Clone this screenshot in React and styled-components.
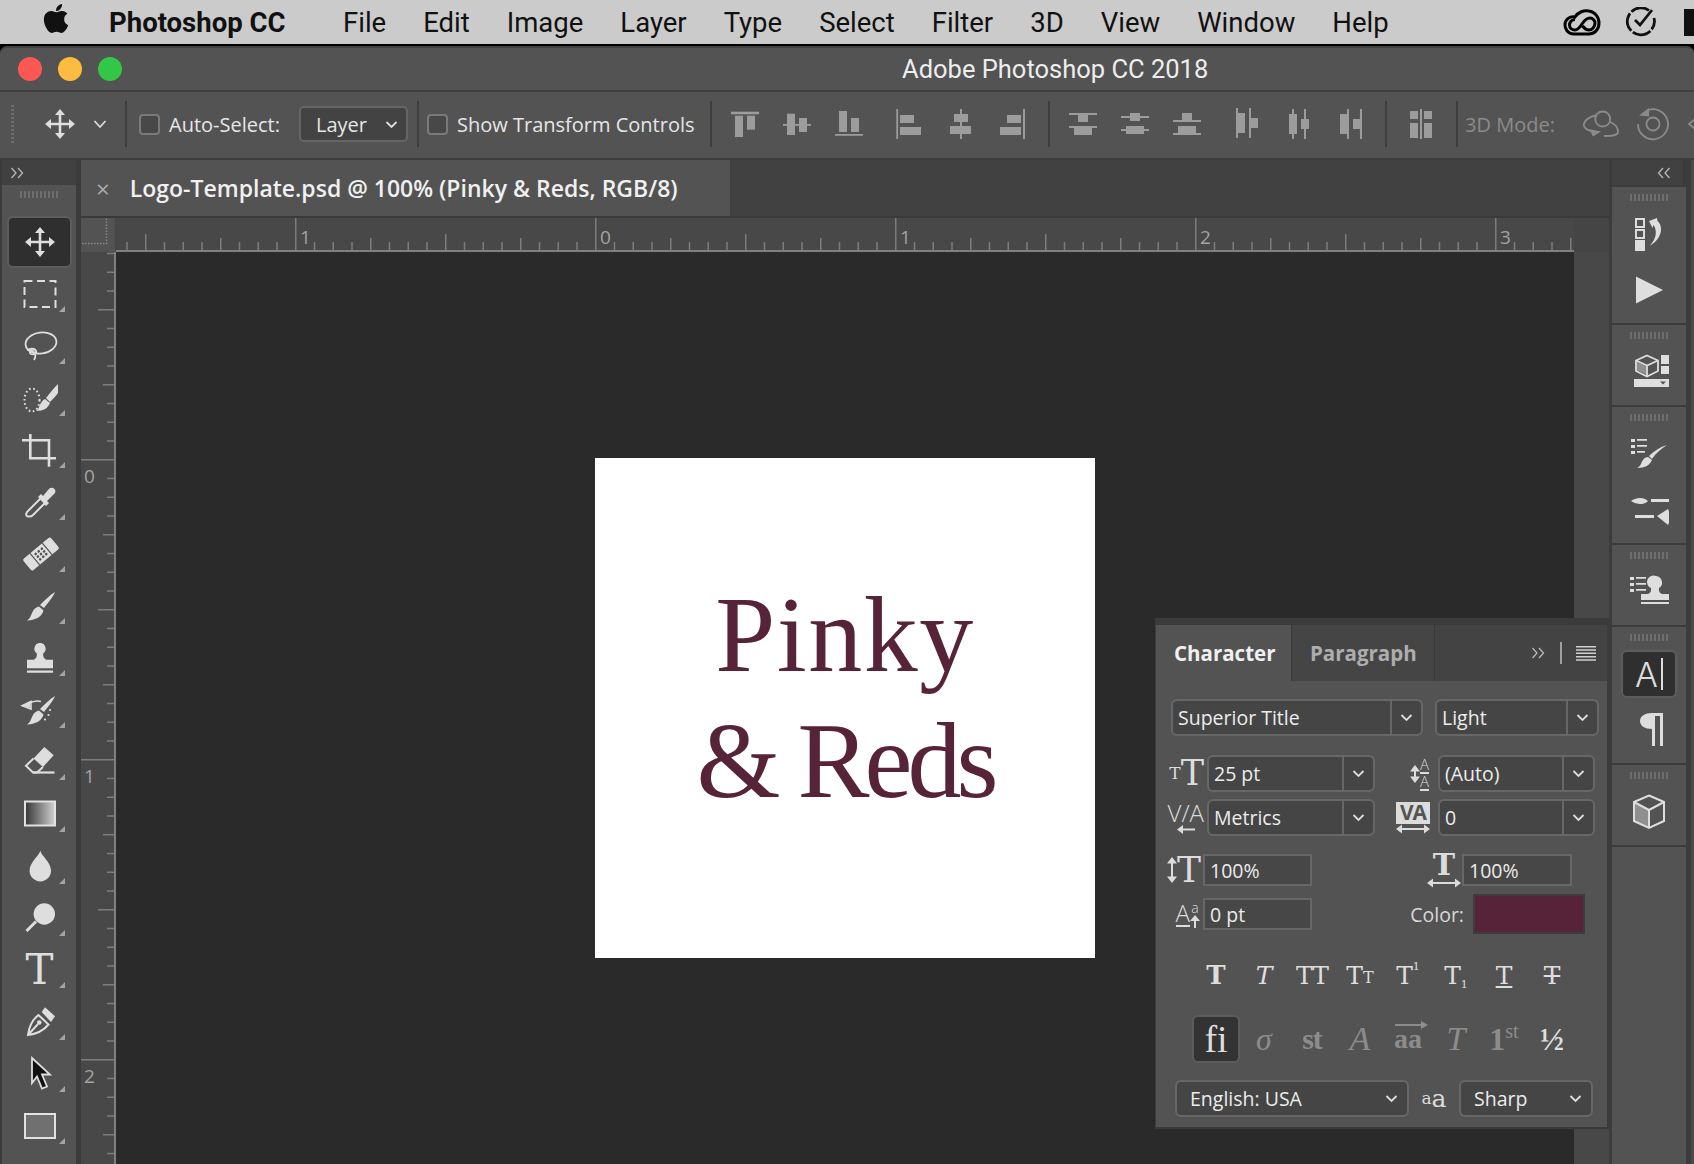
import React from 'react';
import styled, { createGlobalStyle } from 'styled-components';
import { FaApple } from 'react-icons/fa';

const UI = '"Open Sans", "Noto Sans", sans-serif';
const SERIF = '"DejaVu Serif", "Liberation Serif", serif';
const TIMES = '"Liberation Serif", serif';

const Global = createGlobalStyle`
  html, body { margin: 0; padding: 0; width: 1694px; height: 1164px; overflow: hidden; background: #000; }
  * { box-sizing: border-box; }
`;

const Page = styled.div`
  width: 1694px;
  height: 1164px;
  display: flex;
  flex-direction: column;
  overflow: hidden;
  background: #000;
`;

const MenuBar = styled.div`
  height: 46px;
  flex: none;
  display: flex;
  align-items: center;
  background: #cbcbcb;
  border-bottom: 2px solid #000;
  padding-left: 42px;
  font-family: Roboto, sans-serif;
  font-size: 27.5px;
  color: #111;
`;
const AppleMark = styled(FaApple)`
  width: 28px;
  height: 33px;
  margin-top: -8px;
  margin-right: 39px;
  color: #111;
`;
const AppName = styled.span`
  font-weight: 700;
  width: 196px;
  white-space: nowrap;
  margin-right: 38px;
`;
const MenuItem = styled.span`
  margin-right: 37px;
  white-space: nowrap;
`;
const MenuRight = styled.div`
  margin-left: auto;
  display: flex;
  align-items: center;
  gap: 24px;
`;
const MenuCut = styled.div`
  width: 10px;
  height: 27px;
  background: #111;
  margin-left: 3px;
`;

const AppWindow = styled.div`
  flex: 1;
  display: flex;
  flex-direction: column;
  min-height: 0;
  background: #3c3c3c;
  border-radius: 7px 7px 0 0;
  border-top: 2px solid #424242;
  overflow: hidden;
  font-family: ${UI};
`;

const TitleBar = styled.div`
  height: 44px;
  flex: none;
  display: flex;
  align-items: center;
  background: #535353;
  border-bottom: 2px solid #3f3f3f;
  padding-left: 18px;
`;
const Light = styled.span`
  width: 24px;
  height: 24px;
  border-radius: 50%;
  background: ${p => p.$color};
  margin-right: ${p => p.$gap}px;
`;
const WindowTitle = styled.span`
  margin-left: 780px;
  font-family: Roboto, sans-serif;
  font-size: 25.5px;
  color: #ededed;
  white-space: nowrap;
`;

const OptionsBar = styled.div`
  height: 68px;
  flex: none;
  display: flex;
  align-items: center;
  background: #535353;
  border-bottom: 2px solid #3d3d3d;
  padding-bottom: 2px;
  overflow: hidden;
`;
const DotGrip = styled.div`
  flex: none;
  width: 3px;
  height: 38px;
  margin-left: 11px;
  background: repeating-linear-gradient(to bottom, #6d6d6d 0 2px, transparent 2px 4px);
`;
const BarSep = styled.div`
  flex: none;
  width: 2px;
  height: 46px;
  background: #3e3e3e;
  margin-left: ${p => p.$ml}px;
`;
const CheckBox = styled.span`
  flex: none;
  width: 21px;
  height: 21px;
  border: 2px solid #7a7a7a;
  border-radius: 4px;
  background: #484848;
  margin-left: ${p => p.$ml}px;
`;
const BarLabel = styled.span`
  flex: none;
  width: ${p => p.$w}px;
  margin-left: ${p => p.$ml}px;
  font-size: 20px;
  color: ${p => (p.$dim ? '#8b8b8b' : '#e6e6e6')};
  white-space: nowrap;
`;
const BarSelect = styled.div`
  flex: none;
  width: 109px;
  height: 36px;
  margin-left: 9px;
  display: flex;
  align-items: center;
  justify-content: space-between;
  padding: 0 8px 0 15px;
  font-size: 20px;
  color: #e6e6e6;
  background: #434343;
  border: 2px solid #666;
  border-radius: 5px;
`;
const Slot = styled.svg`
  flex: none;
  width: ${p => p.$w || 52}px;
  height: 40px;
  margin-left: ${p => p.$ml || 0}px;
  fill: ${p => p.$color || '#9c9c9c'};
`;

const Workspace = styled.div`
  flex: 1;
  min-height: 0;
  display: flex;
  position: relative;
`;

const LeftDock = styled.div`
  flex: none;
  width: 81px;
  display: flex;
  flex-direction: column;
  background: #3b3b3b;
  padding-left: 2px;
`;
const DockHead = styled.div`
  height: 25px;
  flex: none;
  display: flex;
  align-items: center;
  justify-content: ${p => p.$right ? 'flex-end' : 'flex-start'};
  padding: ${p => p.$right ? '0 12px 0 0' : '0 0 0 8px'};
  background: #414141;
  margin-right: ${p => p.$right ? 0 : 5}px;
`;
const ToolPanel = styled.div`
  flex: 1;
  min-height: 0;
  width: 74px;
  background: #535353;
  overflow: hidden;
  position: relative;
`;
const Grip = styled.div`
  height: 7px;
  width: 38px;
  margin: ${p => p.$top}px auto ${p => p.$bottom}px;
  background: repeating-linear-gradient(to right, #6d6d6d 0 2px, transparent 2px 4px);
`;
const ToolSlot = styled.div`
  position: relative;
  width: 65px;
  height: 52px;
  margin-left: 5px;
  display: flex;
  align-items: center;
  justify-content: center;
  border-radius: 6px;
  border: 2px solid ${p => (p.$active ? '#5c5c5c' : 'transparent')};
  background: ${p => (p.$active ? '#2f2f2f' : 'transparent')};
  color: #dedede;
  &::after {
    content: '';
    display: ${p => (p.$corner ? 'block' : 'none')};
    position: absolute;
    right: 5px;
    bottom: 6px;
    border-style: solid;
    border-width: 0 0 6px 6px;
    border-color: transparent transparent #a5a5a5 transparent;
  }
`;
const ToolSvg = styled.svg`
  width: 40px;
  height: 40px;
  fill: #dedede;
  stroke: none;
  flex: none;
`;
const ToolT = styled.span`
  font-family: ${SERIF};
  font-size: 42px;
  line-height: 40px;
  color: #dedede;
`;

const Main = styled.div`
  flex: none;
  width: 1528px;
  display: flex;
  flex-direction: column;
  min-height: 0;
`;
const DocTabs = styled.div`
  height: 58px;
  flex: none;
  background: #414141;
  border-bottom: 2px solid #3a3a3a;
  display: flex;
`;
const DocTab = styled.div`
  width: 650px;
  display: flex;
  align-items: center;
  padding-left: 15px;
  background: #535353;
  border-right: 1px solid #3f3f3f;
  font-size: 23px;
  font-weight: 600;
  color: #f0f0f0;
  white-space: nowrap;
`;
const TabClose = styled.span`
  font-weight: 400;
  font-size: 24px;
  color: #a9a9a9;
  margin-right: 20px;
`;
const RulerRow = styled.div`
  height: 34px;
  flex: none;
  display: flex;
  background: #454545;
`;
const RulerCorner = styled.svg`
  flex: none;
  width: 35px;
  height: 34px;
  background: #535353;
`;
const RulerSvg = styled.svg`
  flex: none;
  display: block;
  background: #484848;
`;
const CanvasRow = styled.div`
  flex: 1;
  min-height: 0;
  display: flex;
`;
const VRulerWrap = styled.div`
  flex: none;
  width: 35px;
  background: #484848;
`;
const Canvas = styled.div`
  flex: none;
  width: 1458px;
  display: flex;
  align-items: center;
  justify-content: center;
  background: #2a2a2a;
`;
const DocPage = styled.div`
  width: 500px;
  height: 500px;
  background: #fff;
  display: flex;
  flex-direction: column;
  align-items: center;
  justify-content: center;
  padding-bottom: 21px;
  font-family: ${TIMES};
  font-size: 108px;
  line-height: 126px;
  color: #572339;
`;
const DocLine = styled.div`
  letter-spacing: ${p => p.$spacing}px;
  white-space: pre;
`;
const ScrollColumn = styled.div`
  flex: none;
  width: 35px;
  background: #484848;
`;

const RightDock = styled.div`
  flex: none;
  width: 85px;
  display: flex;
  flex-direction: column;
  gap: 2px;
  background: #3c3c3c;
  padding-left: 3px;
  padding-right: 8px;
  border-right: 3px solid #4a4a4a;
`;
const DockGroup = styled.div`
  flex: ${p => (p.$fill ? 1 : 'none')};
  width: 74px;
  background: #535353;
  padding-bottom: 5px;
  margin-right: -4px;
`;
const DockSlot = styled.div`
  height: 56px;
  display: flex;
  align-items: center;
  justify-content: center;
`;
const ActiveBox = styled.div`
  width: 56px;
  height: 48px;
  display: flex;
  align-items: center;
  justify-content: center;
  background: #2f2f2f;
  border: 2px solid #5c5c5c;
  border-radius: 6px;
  font-family: Inter, sans-serif;
  font-size: 34px;
  font-weight: 300;
  color: #dedede;
`;
const Caret = styled.span`
  width: 2px;
  height: 32px;
  background: #dedede;
  margin-left: 3px;
`;

const CharPanel = styled.div`
  position: absolute;
  left: 1155px;
  top: 458px;
  width: 454px;
  height: 511px;
  display: flex;
  flex-direction: column;
  background: #535353;
  border: 1px solid #3b3b3b;
  border-top-width: 7px;
  border-bottom-width: 2px;
  border-right-width: 2px;
`;
const PanelTabs = styled.div`
  height: 56px;
  flex: none;
  display: flex;
  align-items: center;
  background: #434343;
`;
const PanelTab = styled.div`
  height: 100%;
  width: ${p => p.$w}px;
  display: flex;
  align-items: center;
  padding-left: ${p => p.$pl}px;
  font-size: 20.5px;
  font-weight: 700;
  background: ${p => (p.$active ? '#535353' : '#454545')};
  color: ${p => (p.$active ? '#f0f0f0' : '#adadad')};
  border-right: 1px solid #393939;
`;
const PanelTools = styled.div`
  margin-left: auto;
  margin-right: 11px;
  display: flex;
  align-items: center;
`;
const ThinSep = styled.span`
  width: 2px;
  height: 22px;
  background: #a0a0a0;
  margin: 0 14px 0 15px;
`;
const Row = styled.div`
  display: flex;
  align-items: center;
  height: ${p => p.$h}px;
  margin-top: ${p => p.$mt}px;
  padding-left: ${p => p.$pl || 0}px;
  flex: none;
`;
const Field = styled.div`
  flex: none;
  width: ${p => p.$w}px;
  height: 100%;
  display: flex;
  align-items: stretch;
  background: #454545;
  border: 2px solid #676767;
  border-radius: 6px;
  font-size: 19.5px;
  color: #ececec;
  margin-left: ${p => p.$ml || 0}px;
`;
const FieldText = styled.span`
  flex: 1;
  display: flex;
  align-items: center;
  padding-left: ${p => p.$pl || 5}px;
  white-space: nowrap;
`;
const FieldArrow = styled.span`
  flex: none;
  width: 31px;
  display: flex;
  align-items: center;
  justify-content: center;
  border-left: ${p => (p.$plain ? 'none' : '2px solid #676767')};
`;
const PlainInput = styled.div`
  flex: none;
  width: ${p => p.$w}px;
  height: 100%;
  display: flex;
  align-items: center;
  padding-left: 5px;
  background: #474747;
  border: 2px solid #676767;
  font-size: 19.5px;
  color: #ececec;
`;
const IconCell = styled.div`
  flex: none;
  width: ${p => p.$w}px;
  height: 36px;
  position: relative;
  display: flex;
  align-items: center;
  justify-content: ${p => p.$justify || 'flex-end'};
  padding-right: ${p => p.$pr || 0}px;
  color: #dcdcdc;
  font-family: ${SERIF};
  line-height: 1;
`;
const IconStack = styled.div`
  display: flex;
  flex-direction: column;
  align-items: center;
`;
const SerifT = styled.span`
  font-family: ${SERIF};
  font-size: ${p => p.$size}px;
  font-weight: ${p => (p.$bold ? 700 : 400)};
  line-height: ${p => p.$lh || 1};
  color: #dcdcdc;
`;
const SansMark = styled.span`
  font-family: ${UI};
  font-size: ${p => p.$size}px;
  font-weight: 300;
  line-height: 1;
  color: #dcdcdc;
  border-bottom: ${p => (p.$under ? '2px solid #dcdcdc' : 'none')};
`;
const VaBlock = styled.span`
  width: 34px;
  height: 22px;
  display: flex;
  align-items: center;
  justify-content: center;
  background: #dcdcdc;
  color: #545454;
  font-family: ${UI};
  font-weight: 700;
  font-size: 21px;
  letter-spacing: -1px;
`;
const ColorLabel = styled.span`
  margin-left: auto;
  margin-right: 9px;
  font-size: 19.5px;
  color: #d8d8d8;
`;
const Swatch = styled.div`
  flex: none;
  width: 112px;
  height: 40px;
  background: #572339;
  border: 2px solid #3d3d3d;
  margin-right: 22px;
`;
const GlyphRow = styled.div`
  flex: none;
  display: flex;
  align-items: center;
  height: ${p => p.$h}px;
  margin-top: ${p => p.$mt}px;
  padding-left: 36px;
`;
const GlyphCell = styled.div`
  flex: none;
  width: 48px;
  height: 100%;
  display: flex;
  align-items: center;
  justify-content: center;
  position: relative;
  font-family: ${p => (p.$times ? TIMES : SERIF)};
  font-size: ${p => p.$size}px;
  font-weight: ${p => (p.$bold ? 700 : 400)};
  font-style: ${p => (p.$italic ? 'italic' : 'normal')};
  letter-spacing: ${p => p.$track || 0}px;
  text-decoration: ${p => p.$line || 'none'};
  color: ${p => (p.$muted ? '#8c8c8c' : '#dedede')};
  border: 2px solid ${p => (p.$active ? '#5c5c5c' : 'transparent')};
  border-radius: 6px;
  background: ${p => (p.$active ? '#333' : 'transparent')};
  line-height: 1;
`;
const Sup = styled.span`
  font-size: ${p => p.$size}px;
  position: relative;
  top: ${p => p.$top}px;
  font-weight: ${p => (p.$bold ? 700 : 400)};
`;
const OverArrow = styled.svg`
  position: absolute;
  left: 0;
  top: 1px;
  width: 48px;
  height: 12px;
`;

function Chevron({ size = 13, color = '#dcdcdc' }) {
  return (
    <svg width={size} height={size} viewBox="0 0 13 13" fill="none" stroke={color} strokeWidth="1.8">
      <path d="M1.5 4l5 5 5-5" />
    </svg>
  );
}

function Select({ w, ml, pl, label, plain }) {
  return (
    <Field $w={w} $ml={ml}>
      <FieldText $pl={pl}>{label}</FieldText>
      <FieldArrow $plain={plain}><Chevron /></FieldArrow>
    </Field>
  );
}

function MoveGlyph({ color = '#dedede' }) {
  return (
    <>
      <path d="M20 8v24M8 20h24" stroke={color} strokeWidth="2.6" fill="none" />
      <path d="M20 5l5 6H15zM20 35l5-6H15zM5 20l6-5v10zM35 20l-6-5v10z" fill={color} />
    </>
  );
}

// shared brush shape, used by several tools and dock buttons
const BRUSH = 'M35 6C33 11 28 17 24 22L20 19C25 14 30 9 35 6ZM19 20.5L23.5 24.5C22 30 17 34 7 34.5C11 32 11 28 13 25C14 23 16 21 19 20.5Z';

const TOOLS = [
  { key: 'move', active: true, draw: <MoveGlyph /> },
  { key: 'marquee', draw: <rect x="4.5" y="7" width="31" height="26" fill="none" stroke="#dedede" strokeWidth="2" strokeDasharray="8 4.5" /> },
  { key: 'lasso', draw: <g fill="none" stroke="#dedede" strokeWidth="1.8"><ellipse cx="21" cy="17" rx="15.5" ry="10.5" transform="rotate(-8 21 17)" /><path d="M8 25c1-3 7-3 8 0 1 2-2 4-5 3-2-1-1-4 2-3 3 2 3 6 1 9" /></g> },
  { key: 'quick', draw: <g><ellipse cx="12" cy="22" rx="7.5" ry="11.5" fill="none" stroke="#dedede" strokeWidth="2" strokeDasharray="1.6 2.6" /><path d="M38 6v9C36 18 33 21 30 24L26 20C29 16 34 10 38 6ZM25 21L30 25C28 30 24 33 16 33C19 31 19 28 21 25C22 23 23 22 25 21Z" /></g> },
  { key: 'crop', draw: <path d="M2 10.3h27v26.5M10.3 4v24.3H34M31 28.3h5" fill="none" stroke="#dedede" strokeWidth="2.6" /> },
  { key: 'dropper', draw: <g><path d="M21 16L7 30Q5 34 8 34.5Q11 35 13 33L26 20" fill="none" stroke="#dedede" strokeWidth="2" /><path d="M18 15L21 12L23 14L28 8Q31 4 34.5 7Q37 10 33 13L27 19L29 21L26 24Z" /></g> },
  { key: 'heal', draw: <g transform="rotate(-40 21 20)"><rect x="3" y="12.5" width="36" height="15" rx="2" /><path d="M13 12.5v15M29 12.5v15" stroke="#535353" strokeWidth="1.2" /><g fill="#535353"><circle cx="17" cy="16.5" r="1.3" /><circle cx="21" cy="16.5" r="1.3" /><circle cx="25" cy="16.5" r="1.3" /><circle cx="17" cy="20" r="1.3" /><circle cx="21" cy="20" r="1.3" /><circle cx="25" cy="20" r="1.3" /><circle cx="17" cy="23.5" r="1.3" /><circle cx="21" cy="23.5" r="1.3" /><circle cx="25" cy="23.5" r="1.3" /></g></g> },
  { key: 'brush', draw: <path d={BRUSH} /> },
  { key: 'stamp', draw: <path d="M20 5a5.6 5.6 0 0 1 3.2 10.2c-.4 3 .2 5 3 6.5h6.8v8.6H7v-8.6h6.8c2.8-1.500 3.400-3.500 3-6.500A5.600 5.600 0 0 1 20 5ZM7 32.500h26v2.200H7Z" /> },
  { key: 'history', draw: <g><path d={BRUSH} /><path d="M2 15.700l9-4.200v7.500zM9 13.500c4-2.500 8-3 12-2" fill="none" stroke="#dedede" strokeWidth="1.600" /><path d="M2 15.700l7.500-4.500 1 6.500z" /><circle cx="30" cy="20" r="1.100" /><circle cx="28.500" cy="25" r="1.100" /><circle cx="25" cy="29.500" r="1.100" /></g> },
  { key: 'eraser', draw: <g><path d="M24.300 5L33.700 13.300L23 25L13.500 16.500Z" /><path d="M13.500 16.500L6 23.700L13 30.500H17L23 25" fill="none" stroke="#dedede" strokeWidth="2" /><path d="M13 30.500h21.500" stroke="#dedede" strokeWidth="2.200" /></g> },
  { key: 'gradient', draw: <g><defs><linearGradient id="gradTool"><stop offset="0" stopColor="#353535" /><stop offset="1" stopColor="#d2d2d2" /></linearGradient></defs><rect x="5" y="7.500" width="30" height="24" fill="url(#gradTool)" stroke="#e2e2e2" strokeWidth="2" /></g> },
  { key: 'drop', draw: <path d="M20.300 4.700C21.500 10 31 16 31 24.700A10.700 10.700 0 0 1 9.600 24.700C9.600 16 19 10 20.300 4.700Z" /> },
  { key: 'dodge', draw: <g><circle cx="24.300" cy="16" r="10.700" /><path d="M16 23.500L6.500 33" stroke="#dedede" strokeWidth="3" /></g> },
  { key: 'type', text: 'T' },
  { key: 'pen', draw: <g><path d="M8 33C9 25 12 18 18.500 13L28.500 22.500C24 28 16 32 8 33ZM8 33L18 22" fill="none" stroke="#dedede" strokeWidth="2" /><circle cx="19.300" cy="20.500" r="2.300" /><path d="M25 5.300L35 14.300L31 20L21.700 10Z" /></g> },
  { key: 'select', noCorner: false, draw: <path d="M12 4L30 20.500H22L27 32.500L22 34.500L17 22.500L12 29Z" fill="#111" stroke="#dedede" strokeWidth="1.800" /> },
  { key: 'shape', draw: <rect x="5" y="8" width="30" height="24" fill="#707070" stroke="#e2e2e2" strokeWidth="2" /> },
  { key: 'hand', draw: <path d="M7 16c4-8 22-8 26 0" fill="none" stroke="#dedede" strokeWidth="2" /> },
];

const ALIGNS = [
  { ml: 7, r: [[12, 7.7, 28, 2.600], [16, 11.700, 8, 21.300], [28, 11.700, 8, 14]] },
  { r: [[12, 20, 28, 1.800], [16, 9.700, 8, 21.300], [28, 14, 8, 14]] },
  { r: [[12, 30, 28, 1.800], [16, 7, 8, 21], [28, 14, 8, 14]] },
  { ml: 8, r: [[13.300, 5, 1.800, 30], [17, 11, 14, 8], [17, 23, 21, 8]] },
  { r: [[25, 5, 2, 30], [19, 10, 14, 8], [15, 22, 21, 8]] },
  { r: [[36, 5, 2, 30], [20, 11, 14, 8], [13, 23, 21, 8]] },
];
const DISTRIBUTES = [
  { ml: 6, r: [[13, 9, 28, 2], [22, 11, 10, 7], [13, 22, 28, 2], [18, 24, 18, 7]] },
  { r: [[13, 12, 28, 2], [22, 9, 10, 8], [13, 25, 28, 2], [18, 22, 18, 8]] },
  { r: [[13, 16, 28, 2], [22, 9, 10, 7], [13, 29, 28, 2], [18, 22, 18, 7]] },
  { ml: 9, r: [[15, 4, 2, 30], [17, 9, 7, 20], [28, 4, 2, 30], [30, 14, 7, 10]] },
  { r: [[19, 5, 2, 30], [16, 10, 8, 20], [31, 5, 2, 30], [28, 15, 8, 10]] },
  { r: [[22, 5, 2, 30], [15, 10, 7, 20], [35, 5, 2, 30], [28, 15, 7, 10]] },
];

function AlignIcon({ ml, rects }) {
  return (
    <Slot $ml={ml} viewBox="0 0 52 40">
      {rects.map((r, i) => <rect key={i} x={r[0]} y={r[1]} width={r[2]} height={r[3]} />)}
    </Slot>
  );
}

function CollapseArrows({ left }) {
  return (
    <svg width="14" height="12" viewBox="0 0 14 12" fill="none" stroke="#b8b8b8" strokeWidth="1.300">
      <path d={left ? 'M6 1L1.500 6 6 11M12.500 1L8 6l4.500 5' : 'M1.500 1L6 6l-4.500 5M8 1l4.500 5L8 11'} />
    </svg>
  );
}

const tickLength = i => (i % 16 === 0 ? 32 : i % 8 === 0 ? 16 : i % 4 === 0 ? 12 : 8);

function HRuler() {
  const ticks = [];
  for (let i = -25; i <= 52; i++) ticks.push(i);
  return (
    <RulerSvg width="1458" height="34" viewBox="0 0 1458 34">
      <rect x="0" y="32" width="1458" height="2" fill="#808080" />
      {ticks.map(i => {
        const x = 479 + i * 18.75;
        return <rect key={i} x={x} y={32 - tickLength(i)} width="1.500" height={tickLength(i)} fill="#7c7c7c" />;
      })}
      {[[-1, 1], [0, 0], [1, 1], [2, 2], [3, 3]].map(([n, label]) => (
        <text key={n} x={479 + n * 300 + 5} y="26" fontFamily="Open Sans, sans-serif" fontSize="19" fill="#a3a3a3">{label}</text>
      ))}
    </RulerSvg>
  );
}

function VRuler() {
  const ticks = [];
  for (let i = -11; i <= 38; i++) ticks.push(i);
  return (
    <RulerSvg width="35" height="912" viewBox="0 0 35 912">
      <rect x="33" y="0" width="2" height="912" fill="#808080" />
      {ticks.map(i => {
        const y = 207 + i * 18.75;
        const len = i % 16 === 0 ? 33 : i % 8 === 0 ? 16 : i % 4 === 0 ? 11 : 7;
        return <rect key={i} x={33 - len} y={y} width={len} height="1.500" fill="#7c7c7c" />;
      })}
      {[0, 1, 2].map(n => (
        <text key={n} x="3" y={207 + n * 300 + 24} fontFamily="Open Sans, sans-serif" fontSize="19" fill="#a3a3a3">{n}</text>
      ))}
    </RulerSvg>
  );
}

function Arrow2({ width = 34 }) {
  return (
    <svg width={width} height="10" viewBox={`0 0 ${width} 10`} fill="#dcdcdc">
      <path d={`M0 5l6-4.500v3.500H${width - 6}V.500l6 4.500-6 4.500V6H6v3.500z`} />
    </svg>
  );
}

function UpDown({ h = 26 }) {
  return (
    <svg width="10" height={h} viewBox={`0 0 10 ${h}`} fill="#dcdcdc">
      <path d={`M5 0l5 6.500H6V${h - 6.500}h4L5 ${h}l-5-6.500h4V6.500H0z`} />
    </svg>
  );
}

export default function App() {
  return (
    <Page>
      <Global />
      <MenuBar>
        <AppleMark />
        <AppName>Photoshop CC</AppName>
        {['File', 'Edit', 'Image', 'Layer', 'Type', 'Select', 'Filter', '3D', 'View', 'Window', 'Help'].map(m => (
          <MenuItem key={m}>{m}</MenuItem>
        ))}
        <MenuRight>
          <svg width="38" height="27" viewBox="0 0 38 27" fill="none" stroke="#000" strokeWidth="3">
            <path d="M11 25C4 25 2 19 2 16C2 10 7 7 12 8C15 3 21 1 26 2C32 3 36 8 36 14C36 21 31 25 26 25Z" />
            <path d="M12 10.500C8 10.500 6.500 14 6.500 16C6.500 19 9 21 12 21C15 21 17 18 19 15C21 12 23 9 27 9C30 9 32 12 32 14C32 18 29 21 26 21C23 21 21 19 19.500 17" />
          </svg>
          <svg width="32" height="30" viewBox="0 0 32 30" fill="none" stroke="#111" strokeWidth="2.800">
            <path d="M24 3.500A13.500 13.500 0 1 0 29 11" strokeDasharray="19 2 19 2 19 2 19 2" />
            <path d="M10 13l5 5L27 3" />
          </svg>
          <MenuCut />
        </MenuRight>
      </MenuBar>

      <AppWindow>
        <TitleBar>
          <Light $color="#fc5753" $gap={16} />
          <Light $color="#fdbc40" $gap={16} />
          <Light $color="#33c748" $gap={0} />
          <WindowTitle>Adobe Photoshop CC 2018</WindowTitle>
        </TitleBar>

        <OptionsBar>
          <DotGrip />
          <Slot $w={40} $ml={26} viewBox="0 0 40 40"><MoveGlyph /></Slot>
          <Slot $w={14} $ml={13} viewBox="0 0 14 40" $color="none"><path d="M1.500 17l5.500 6 5.500-6" stroke="#dcdcdc" strokeWidth="1.800" fill="none" /></Slot>
          <BarSep $ml={18} />
          <CheckBox $ml={12} />
          <BarLabel $w={121} $ml={9}>Auto-Select:</BarLabel>
          <BarSelect>Layer<Chevron /></BarSelect>
          <BarSep $ml={9} />
          <CheckBox $ml={8} />
          <BarLabel $w={244} $ml={9}>Show Transform Controls</BarLabel>
          <BarSep $ml={9} />
          {ALIGNS.map((a, i) => <AlignIcon key={i} ml={a.ml} rects={a.r} />)}
          <BarSep $ml={9} />
          {DISTRIBUTES.map((a, i) => <AlignIcon key={i} ml={a.ml} rects={a.r} />)}
          <BarSep $ml={8} />
          <Slot $ml={7} viewBox="0 0 52 40">
            <path d="M16 7h8v8h-8zM16 19h8v15h-8zM30 7h8v8h-8zM30 19h8v15h-8zM26 5h2v30h-2z" />
          </Slot>
          <BarSep $ml={10} />
          <BarLabel $w={93} $ml={7} $dim>3D Mode:</BarLabel>
          <Slot $ml={15} viewBox="0 0 52 40" $color="none">
            <g stroke="#8b8b8b" strokeWidth="1.800" fill="none">
              <circle cx="29.700" cy="15" r="7.500" />
              <path d="M23 11.500C17 12 10 17 11 22c.5 2 2 3 6 5M37 18c5 2 8 6 8 10 0 3-4 4-14 4" />
            </g>
            <path d="M16 25l12 2.500-8 5z" fill="#8b8b8b" />
          </Slot>
          <Slot $ml={2} viewBox="0 0 52 40" $color="none">
            <g stroke="#8b8b8b" strokeWidth="1.800" fill="none">
              <circle cx="26" cy="20" r="6.500" />
              <path d="M19 7A15 15 0 1 1 11 20" />
            </g>
            <path d="M22 4v8.500l-10-1z" fill="#8b8b8b" />
          </Slot>
          <Slot $ml={2} viewBox="0 0 52 40" $color="none">
            <path d="M14 15l-6 5 6 5" stroke="#8b8b8b" strokeWidth="1.800" fill="none" />
          </Slot>
        </OptionsBar>

        <Workspace>
          <LeftDock>
            <DockHead><CollapseArrows /></DockHead>
            <ToolPanel>
              <Grip $top={6} $bottom={18} />
              {TOOLS.map(t => (
                <ToolSlot key={t.key} $active={t.active} $corner={!t.active}>
                  {t.text ? <ToolT>{t.text}</ToolT> : <ToolSvg viewBox="0 0 40 40">{t.draw}</ToolSvg>}
                </ToolSlot>
              ))}
            </ToolPanel>
          </LeftDock>

          <Main>
            <DocTabs>
              <DocTab><TabClose>×</TabClose>Logo-Template.psd @ 100% (Pinky  &amp; Reds, RGB/8)</DocTab>
            </DocTabs>
            <RulerRow>
              <RulerCorner viewBox="0 0 35 34">
                <path d="M1 25.500H25.500V0" fill="none" stroke="#8a8a8a" strokeWidth="1.400" strokeDasharray="1.500 1.500" />
                <rect x="34" width="1" height="34" fill="#454545" />
              </RulerCorner>
              <HRuler />
            </RulerRow>
            <CanvasRow>
              <VRulerWrap><VRuler /></VRulerWrap>
              <Canvas>
                <DocPage>
                  <DocLine $spacing={1.500}>Pinky</DocLine>
                  <DocLine $spacing={-5}>&amp; Reds</DocLine>
                </DocPage>
              </Canvas>
              <ScrollColumn />
            </CanvasRow>
          </Main>

          <RightDock>
            <DockHead $right><CollapseArrows left /></DockHead>
            <DockGroup>
              <Grip $top={7} $bottom={5} />
              <DockSlot>
                <ToolSvg viewBox="0 0 40 40">
                  <path d="M6 4h10v10H6zM8 6v6h6V6zM6 15h10v10H6zM8 17v6h6v-6zM6 26h10v11H6z" fillRule="evenodd" />
                  <path d="M20 7l8-3 .5 3c6 5 5 18-8 25 7-7 8-15 4-21l-1 3z" />
                </ToolSvg>
              </DockSlot>
              <DockSlot>
                <ToolSvg viewBox="0 0 40 40"><path d="M7 6.500L34 20 7 33.500Z" /></ToolSvg>
              </DockSlot>
            </DockGroup>
            <DockGroup>
              <Grip $top={7} $bottom={5} />
              <DockSlot>
                <ToolSvg viewBox="0 0 40 40">
                  <path d="M18 3.500L29 8.500V19L18 24.500L7 19V8.500Z" fill="none" stroke="#dedede" strokeWidth="1.800" />
                  <path d="M7 8.500l11 5 11-5M18 13.500v11" fill="none" stroke="#dedede" strokeWidth="1.800" />
                  <path d="M8 10l9 4.500v8l-9-4z" fill="#8f8f8f" />
                  <path d="M32 3h8v9h-8zM32 14h8v8h-8zM5 27h35v8H5z" />
                  <path d="M31 29.500h6l-3 3z" fill="#535353" />
                </ToolSvg>
              </DockSlot>
            </DockGroup>
            <DockGroup>
              <Grip $top={7} $bottom={5} />
              <DockSlot>
                <ToolSvg viewBox="0 0 40 40">
                  <path d="M2 5h4v3H2zM8 5h10v1.800H8zM2 11h4v3H2zM8 11h10v1.800H8zM2 17h4v3H2zM8 17h8v1.800H8z" />
                  <path d="M38 11c-6 4-11 8-15 14l-3-3c5-5 11-9 18-11ZM19 23l4 3c-2 5-7 8-15 8 4-2 4-5 6-8 1-2 3-3 5-3Z" />
                </ToolSvg>
              </DockSlot>
              <DockSlot>
                <ToolSvg viewBox="0 0 40 40">
                  <path d="M2 11c4-3 12-5 17 0-5 5-12 3-17 0ZM22 9h20v3H22zM6 25h19v3H6z" />
                  <path d="M28 26l11-7c2 3 2 13 0 16z" />
                </ToolSvg>
              </DockSlot>
            </DockGroup>
            <DockGroup>
              <Grip $top={7} $bottom={5} />
              <DockSlot>
                <ToolSvg viewBox="0 0 40 40">
                  <path d="M1 5h4v3H1zM7 5h10v1.800H7zM1 11h4v3H1zM7 11h10v1.800H7zM1 17h4v3H1zM7 17h10v1.800H7z" />
                  <path d="M27 4a6.500 6.500 0 0 1 3 12c-.3 3 .2 5 3 6h7v6H12v-6h7c2.800-1 3.300-3 3-6a6.500 6.500 0 0 1 5-12ZM12 30h28v2H12z" />
                </ToolSvg>
              </DockSlot>
            </DockGroup>
            <DockGroup>
              <Grip $top={7} $bottom={5} />
              <DockSlot>
                <ActiveBox>A<Caret /></ActiveBox>
              </DockSlot>
              <DockSlot>
                <ToolSvg viewBox="0 0 40 40"><path d="M34 3v33h-3V6h-5v30h-3V19c-7 0-12-3-12-8s5-8 12-8Z" /></ToolSvg>
              </DockSlot>
            </DockGroup>
            <DockGroup>
              <Grip $top={7} $bottom={5} />
              <DockSlot>
                <ToolSvg viewBox="0 0 40 40">
                  <path d="M5 10L20 18V36L5 29Z" fill="#8f8f8f" />
                  <path d="M20 3.500L35 10V29L20 36L5 29V10ZM5 10L20 18L35 10M20 18V36" fill="none" stroke="#dedede" strokeWidth="2" />
                </ToolSvg>
              </DockSlot>
            </DockGroup>
            <DockGroup $fill />
          </RightDock>

          <CharPanel>
            <PanelTabs>
              <PanelTab $active $w={136} $pl={18}>Character</PanelTab>
              <PanelTab $w={143} $pl={18}>Paragraph</PanelTab>
              <PanelTools>
                <CollapseArrows />
                <ThinSep />
                <svg width="20" height="15" viewBox="0 0 20 15" fill="#d0d0d0">
                  <path d="M0 0h20v1.500H0zM0 3.300h20v1.500H0zM0 6.600h20v1.500H0zM0 9.900h20v1.500H0zM0 13.200h20v1.500H0z" />
                </svg>
              </PanelTools>
            </PanelTabs>

            <Row $h={37} $mt={18} $pl={15}>
              <Select w={252} label="Superior Title" />
              <Select w={164} ml={12} label="Light" />
            </Row>
            <Row $h={37} $mt={19}>
              <IconCell $w={48}>
                <SerifT $size={17}>T</SerifT><SerifT $size={35}>T</SerifT>
              </IconCell>
              <Select w={168} ml={3} label="25 pt" />
              <IconCell $w={55} $pr={1}>
                <UpDown h={18} />
                <IconStack>
                  <SansMark $size={15} $under>A</SansMark>
                  <SansMark $size={15} $under>A</SansMark>
                </IconStack>
              </IconCell>
              <Select w={157} ml={8} label="(Auto)" />
            </Row>
            <Row $h={37} $mt={7}>
              <IconCell $w={48}>
                <IconStack>
                  <SansMark $size={24}>V/A</SansMark>
                  <svg width="18" height="9" viewBox="0 0 18 9" fill="#dcdcdc"><path d="M0 4.500L6 0v3.500h12v2H6V9z" /></svg>
                </IconStack>
              </IconCell>
              <Select w={168} ml={3} label="Metrics" />
              <IconCell $w={56} $pr={1}>
                <IconStack>
                  <VaBlock>VA</VaBlock>
                  <Arrow2 />
                </IconStack>
              </IconCell>
              <Select w={157} ml={7} label="0" />
            </Row>
            <Row $h={32} $mt={18}>
              <IconCell $w={47} $pr={2}>
                <UpDown /><SerifT $size={36}>T</SerifT>
              </IconCell>
              <PlainInput $w={109}>100%</PlainInput>
              <IconCell $w={150} $pr={1}>
                <IconStack>
                  <SerifT $size={30} $bold $lh={0.85}>T</SerifT>
                  <Arrow2 />
                </IconStack>
              </IconCell>
              <PlainInput $w={110}>100%</PlainInput>
            </Row>
            <Row $h={32} $mt={12}>
              <IconCell $w={47} $pr={3}>
                <SansMark $size={24} $under>A</SansMark>
                <IconStack>
                  <SansMark $size={14}>a</SansMark>
                  <svg width="10" height="13" viewBox="0 0 10 13" fill="#dcdcdc"><path d="M5 0l5 6H6v7H4V6H0z" /></svg>
                </IconStack>
              </IconCell>
              <PlainInput $w={109}>0 pt</PlainInput>
              <ColorLabel>Color:</ColorLabel>
              <Swatch />
            </Row>

            <GlyphRow $h={40} $mt={25}>
              <GlyphCell $size={26} $bold>T</GlyphCell>
              <GlyphCell $size={25} $italic>T</GlyphCell>
              <GlyphCell $size={25} $track={-1}>TT</GlyphCell>
              <GlyphCell $size={25}>T<Sup $size={16} $top={3}>T</Sup></GlyphCell>
              <GlyphCell $size={25}>T<Sup $size={11} $top={-9}>1</Sup></GlyphCell>
              <GlyphCell $size={25}>T<Sup $size={11} $top={9}>1</Sup></GlyphCell>
              <GlyphCell $size={25} $line="underline">T</GlyphCell>
              <GlyphCell $size={25} $line="line-through">T</GlyphCell>
            </GlyphRow>
            <GlyphRow $h={48} $mt={20}>
              <GlyphCell $active $times $size={38}>fi</GlyphCell>
              <GlyphCell $muted $times $italic $size={32}>σ</GlyphCell>
              <GlyphCell $muted $times $bold $size={30} $track={-1}>st</GlyphCell>
              <GlyphCell $muted $times $italic $size={34}>A</GlyphCell>
              <GlyphCell $muted $times $bold $size={28}>
                <OverArrow viewBox="0 0 48 12" fill="#8c8c8c"><path d="M9 6h26V3l7 4-7 4V8H9z" /></OverArrow>
                aa
              </GlyphCell>
              <GlyphCell $muted $times $italic $size={34}>T</GlyphCell>
              <GlyphCell $muted $times $bold $size={32}>1<Sup $size={20} $top={-8}>st</Sup></GlyphCell>
              <GlyphCell $times $bold $size={32}>½</GlyphCell>
            </GlyphRow>
            <Row $h={37} $mt={17} $pl={19}>
              <Select w={234} pl={13} label="English: USA" plain />
              <IconCell $w={50} $justify="center">
                <SerifT $size={17}>a</SerifT><SerifT $size={25}>a</SerifT>
              </IconCell>
              <Select w={134} pl={13} label="Sharp" plain />
            </Row>
          </CharPanel>
        </Workspace>
      </AppWindow>
    </Page>
  );
}
